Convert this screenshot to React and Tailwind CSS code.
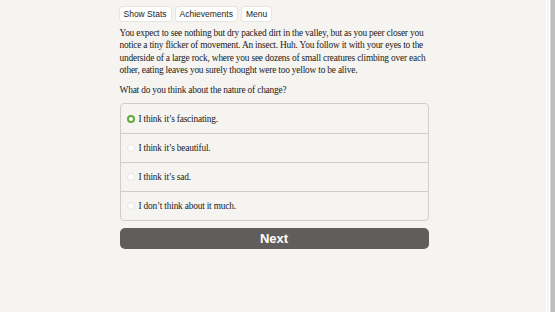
import React from "react";

const choices = [
  "I think it\u2019s fascinating.",
  "I think it\u2019s beautiful.",
  "I think it\u2019s sad.",
  "I don\u2019t think about it much.",
];

const serif = "font-['Liberation_Serif','Times_New_Roman',serif] text-[9.4px] tracking-[-0.2px] text-[#222]";

export default function App() {
  return (
    <div className="flex h-[312px] w-[555px] overflow-hidden bg-[#f5f4f0]">
      <div className="flex flex-1 justify-center pl-[2px]">
        <div className="w-[309px] pt-[7px]">
          <div className="flex gap-[5px] font-['Liberation_Sans',Arial,sans-serif] text-[8.5px] text-[#222]">
            <button className="h-[14px] rounded-[3px] bg-white px-[4px] leading-[14px] shadow-[0_0_0_1px_#e6e5e0]">Show Stats</button>
            <button className="h-[14px] rounded-[3px] bg-white px-[4px] leading-[14px] shadow-[0_0_0_1px_#e6e5e0]">Achievements</button>
            <button className="h-[14px] rounded-[3px] bg-white px-[4px] leading-[14px] shadow-[0_0_0_1px_#e6e5e0]">Menu</button>
          </div>
          <p className={`mt-[6px] leading-[12.3px] ${serif}`}>
            You expect to see nothing but dry packed dirt in the valley, but as you peer closer you notice a tiny flicker of movement. An insect. Huh. You follow it with your eyes to the underside of a large rock, where you see dozens of small creatures climbing over each other, eating leaves you surely thought were too yellow to be alive.
          </p>
          <p className={`mt-[8px] leading-[12.3px] ${serif}`}>
            What do you think about the nature of change?
          </p>
          <div className="mt-[7px] overflow-hidden rounded-[4px] border border-[#cfceca]">
            {choices.map((c, i) => (
              <div
                key={c}
                className={`flex h-[29px] items-center gap-[4px] pl-[6px] ${i > 0 ? "border-t border-[#cfceca]" : ""}`}
              >
                {i === 0 ? (
                  <span className="flex h-[8px] w-[8px] items-center justify-center rounded-full bg-[#62a83c]">
                    <span className="h-[4px] w-[4px] rounded-full bg-white" />
                  </span>
                ) : (
                  <span className="h-[8px] w-[8px] rounded-full border border-[#e6e5e1] bg-white" />
                )}
                <span className={serif}>{c}</span>
              </div>
            ))}
          </div>
          <button className="mt-[7px] flex h-[21px] w-full items-center justify-center rounded-[5px] bg-[#5f5e5c] font-['Liberation_Sans',Arial,sans-serif] text-[13px] font-bold text-white">
            Next
          </button>
        </div>
      </div>
      <div className="flex w-[9px]">
        <div className="w-px bg-white" />
        <div className="w-[2px]" />
        <div className="w-px bg-white" />
        <div className="w-px bg-[#d6d6d6]" />
        <div className="w-[4px] bg-[#bdbdbd]" />
      </div>
    </div>
  );
}
